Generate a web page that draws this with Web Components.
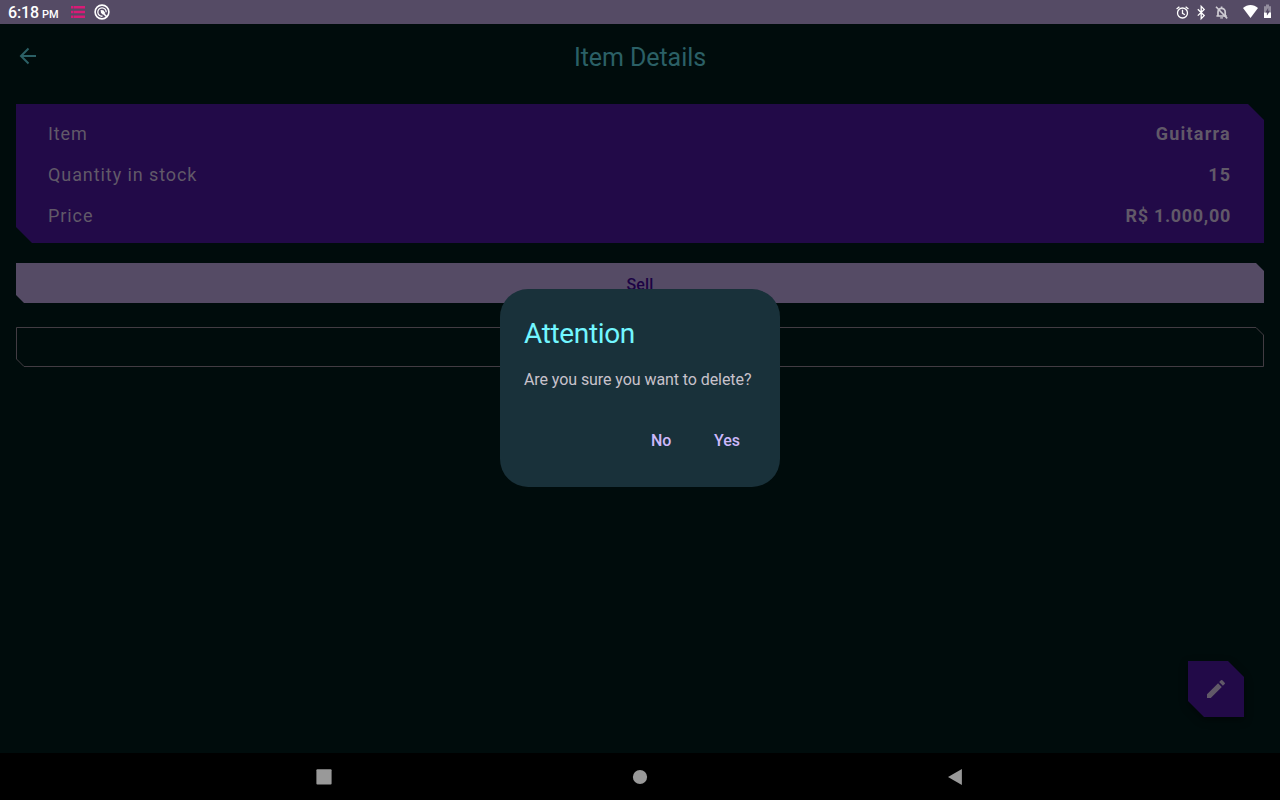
<!DOCTYPE html>
<html lang="en">
<head>
<meta charset="utf-8">
<title>Item Details</title>
<style>
html,body{margin:0;height:100%;overflow:hidden;background:#000}
body{font-family:Roboto,"Noto Sans",sans-serif}
</style>
</head>
<body>
<stock-app></stock-app>
<script>
const define = (name, html) => customElements.define(name, class extends HTMLElement {
  constructor() {
    super();
    const t = document.createElement('template');
    t.innerHTML = html;
    this.attachShadow({mode: 'open'}).append(t.content.cloneNode(true));
  }
});

define('status-bar', `
<style>
:host{display:flex;align-items:center;height:24px;background:#554b65;color:#fff;box-sizing:border-box;padding:0 8px}
.time{font-size:16px;font-weight:500;line-height:22px;padding-top:3px;width:62px;white-space:nowrap;letter-spacing:-.1px}
.time small{font-size:11px;margin-left:3px}
svg{display:block;flex:none}
.gap{flex:1}
</style>
<span class="time">6:18<small>PM</small></span>
<svg width="16" height="24" viewBox="70 0 16 24" fill="#d81b76"><path d="M71 6h2v2.4h-2zM73.5 6H85v2.4H73.5zM71 10.8h2v2.4h-2zM73.5 10.8H85v2.4H73.5zM71 15.6h2V18h-2zM73.5 15.6H85V18H73.5z"/></svg>
<svg width="24" height="24" viewBox="86 0 24 24" fill="none" stroke="#fff"><circle cx="102" cy="12" r="6.9" stroke-width="1.6"/><path d="M102.5 16.2A4.2 4.2 0 1 1 106.2 12.3" stroke-width="1.3"/><path d="M100.6 10l2.8.2 2 3-1.4.8-1 .7-2-1.6z" fill="#fff" stroke="none"/><path d="M103.5 13.5l3.5 3.5" stroke-width="1.6"/></svg>
<span class="gap"></span>
<svg width="98" height="24" viewBox="1174 0 98 24">
<g fill="none" stroke="#fff" stroke-width="1.3"><circle cx="1182.5" cy="13" r="5"/><path d="M1182.5 9.8v3.5l2.4 1.4M1176.6 9.1l2.8-2.4M1188.4 9.1l-2.8-2.4"/><path d="M1197.8 9.3l6.4 6.3-3 3V6.4l3 3-6.4 6.2"/></g>
<g fill="none" stroke="#fff" opacity=".72"><path d="M1218 15.8V12a3.6 3.6 0 0 1 7.2 0v3.8M1216.4 16h10.4M1221.6 6.4v2" stroke-width="1.7"/><path d="M1220.2 17.3h2.8v1.2h-2.8z" fill="#fff" stroke="none"/><path d="M1216 6.8l11.2 11.6" stroke-width="1.6"/></g>
<path d="M1243 8.1c4.4-4 10.6-4 15 0l-7.5 9.8z" fill="#fff"/>
<path d="M1266 4.6h3v1.6h2V18h-7V6.2h2z" fill="#fff" opacity=".38"/><path d="M1264 12.5h2.8v3l2-3h2.2V18h-7z" fill="#fff"/><path d="M1268.2 7.7l-2.8 4.8h1.7v3l2.8-4.8h-1.7z" fill="#554b65"/>
</svg>`);

define('top-bar', `
<style>
:host{display:grid;grid-template-columns:56px 1fr 56px;align-items:center;height:64px;color:#2b6066}
h1{margin:0;text-align:center;font-size:25px;line-height:32px;font-weight:400;letter-spacing:-.08px;padding-top:3px}
svg{display:block}
</style>
<svg width="56" height="64" viewBox="0 0 56 64" fill="none" stroke="currentColor" stroke-width="2"><path d="M36 32H21.5M28.5 24.5L21 32l7.5 7.5"/></svg>
<h1><slot></slot></h1>`);

define('detail-card', `
<style>
:host{display:flex;flex-direction:column;height:139px;box-sizing:border-box;padding:9px 33px 7px 32px;background:#220a48;clip-path:polygon(0 0,calc(100% - 16px) 0,100% 16px,100% 100%,16px 100%,0 calc(100% - 16px))}
</style><slot></slot>`);

define('detail-row', `
<style>
:host{display:flex;justify-content:space-between;align-items:center;height:41px;color:#615968;font-size:18px;letter-spacing:.92px;white-space:nowrap}
.value{font-weight:700;letter-spacing:var(--value-spacing,1px)}
</style><span><slot></slot></span><span class="value"><slot name="value"></slot></span>`);

define('cut-button', `
<style>
:host{display:flex;align-items:center;justify-content:center;height:40px;padding-top:2px;box-sizing:border-box;font-size:16px;font-weight:500;letter-spacing:.1px;background:#554b65;color:#1c0344;clip-path:polygon(0 0,calc(100% - 8px) 0,100% 8px,100% 100%,8px 100%,0 calc(100% - 8px))}
:host([outlined]){background:none;clip-path:none;padding:0}
svg{display:none}
:host([outlined]) svg{display:block}
</style>
<svg width="1248" height="40" fill="none" stroke="#423c43"><path d="M.5.5H1240L1247.5 8V39.5H8L.5 32z"/></svg><slot></slot>`);

define('edit-fab', `
<style>
:host{display:block;width:56px;height:56px;filter:drop-shadow(0 3px 4px #0006)}
svg{display:block}
</style>
<svg width="56" height="56"><path d="M0 0h40l16 16v40H16L0 40z" fill="#220a48"/><path transform="translate(16 16)" fill="#615968" d="M3 17.25V21h3.75L17.81 9.94l-3.75-3.75L3 17.25zM20.71 7.04a1 1 0 0 0 0-1.41l-2.34-2.34a1 1 0 0 0-1.41 0l-1.83 1.83 3.75 3.75 1.83-1.83z"/></svg>`);

define('confirm-dialog', `
<style>
:host{display:block;box-sizing:border-box;width:280px;height:198px;padding:24px;border-radius:28px;background:#19313a;white-space:nowrap}
h2{margin:2px 0 0;font-weight:400;font-size:28px;line-height:37px;letter-spacing:-.35px;color:#72f6ff}
p{margin:17px 0 0;font-size:16px;line-height:22px;letter-spacing:-.075px;color:#c8c2cb}
.actions{display:flex;justify-content:flex-end;gap:42.6px;padding-right:16px;margin-top:39px;font-size:16px;line-height:22px;font-weight:500;color:#cdb8fa}
</style>
<h2><slot name="title"></slot></h2><p><slot></slot></p>
<div class="actions"><slot name="actions"></slot></div>`);

define('nav-bar', `
<style>
:host{display:flex;align-items:center;justify-content:center;gap:268px;height:47px;background:#000}
svg{display:block}
</style>
<svg width="48" height="47" viewBox="300 753 48 47"><rect x="316.4" y="769.2" width="15.2" height="15.4" rx="1" fill="#999"/></svg>
<svg width="48" height="47" viewBox="616 753 48 47"><circle cx="640" cy="777" r="7.1" fill="#999"/></svg>
<svg width="48" height="47" viewBox="932 753 48 47"><path d="M948 777L961.9 769V785z" fill="#999"/></svg>`);

define('stock-app', `
<style>
:host{display:flex;flex-direction:column;width:1280px;height:800px;position:relative;background:#000c0c}
main{flex:1;display:flex;flex-direction:column;padding:16px 16px 36px}
cut-button{margin-top:20px}
cut-button[outlined]{margin-top:24px}
edit-fab{margin:auto 20px 0 auto}
.name{--value-spacing:1.25px}
.price{--value-spacing:.68px}
confirm-dialog{position:absolute;left:500px;top:289px}
</style>
<status-bar></status-bar>
<top-bar>Item Details</top-bar>
<main>
<detail-card>
<detail-row class="name">Item<span slot="value">Guitarra</span></detail-row>
<detail-row>Quantity in stock<span slot="value">15</span></detail-row>
<detail-row class="price">Price<span slot="value">R$ 1.000,00</span></detail-row>
</detail-card>
<cut-button>Sell</cut-button>
<cut-button outlined></cut-button>
<edit-fab></edit-fab>
</main>
<nav-bar></nav-bar>
<confirm-dialog><span slot="title">Attention</span>Are you sure you want to delete?<span slot="actions">No</span><span slot="actions">Yes</span></confirm-dialog>`);
</script>
</body>
</html>
